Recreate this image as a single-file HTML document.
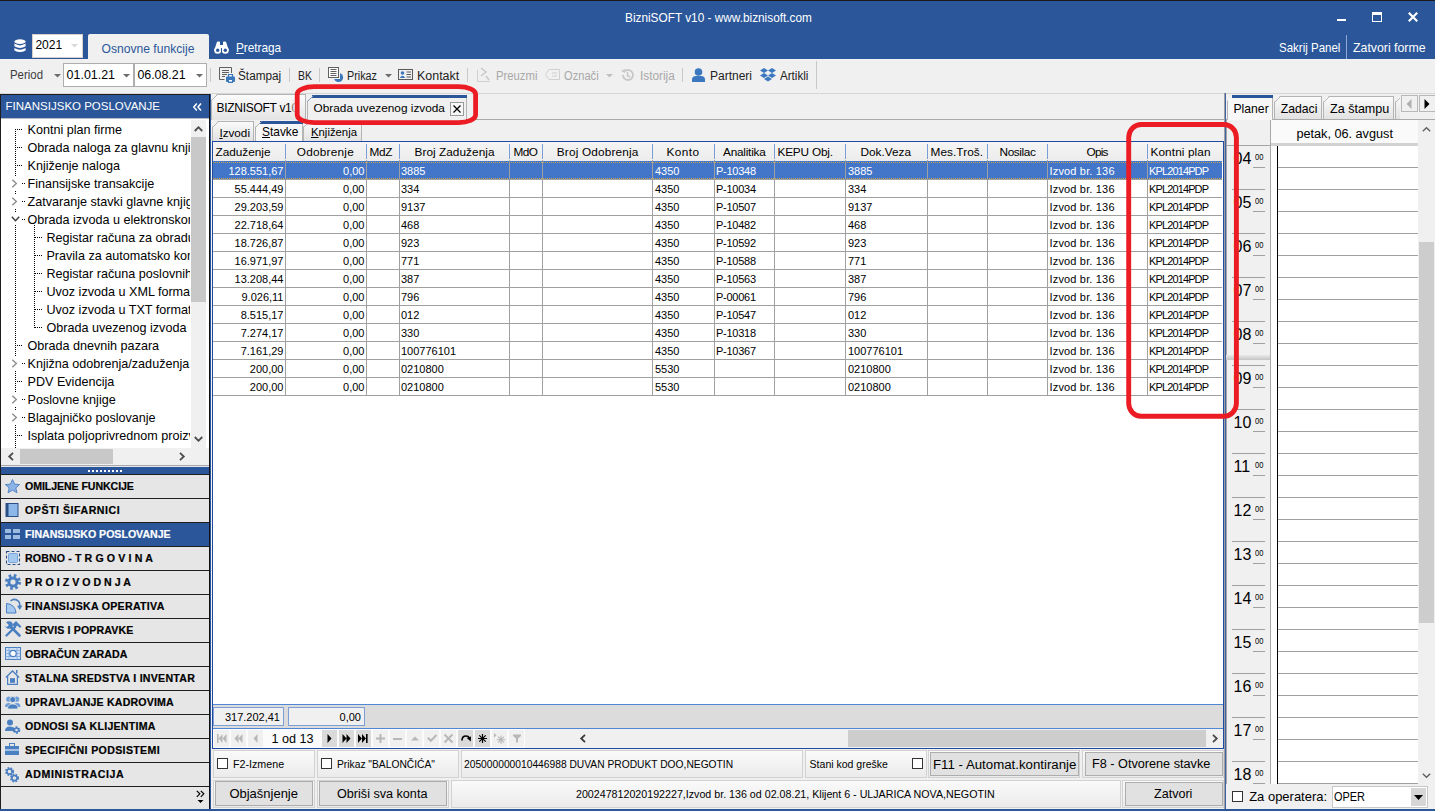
<!DOCTYPE html>
<html><head><meta charset="utf-8"><title>BizniSOFT</title>
<style>
html,body{margin:0;padding:0;}
body{width:1435px;height:811px;overflow:hidden;position:relative;background:#f0f0f0;font-family:"Liberation Sans",sans-serif;}
div{position:absolute;box-sizing:border-box;}
svg{overflow:visible;}
</style></head><body>
<div style="left:0px;top:0px;width:1435px;height:1px;background:#1b1b1b;"></div>
<div style="left:0px;top:1px;width:1435px;height:58px;background:#2b579a;"></div>
<div style="left:625px;top:9.4px;width:215.97px;height:17px;line-height:17px;font-size:13.4px;color:#fff;white-space:nowrap;transform:scaleX(0.8822);transform-origin:0 50%;">BizniSOFT v10 - www.biznisoft.com</div>
<div style="left:1337px;top:19px;width:9px;height:2px;background:#fff;"></div>
<div style="left:1372px;top:11.6px;width:10px;height:10px;border:1px solid #fff;border-top-width:3px;"></div>
<svg style="position:absolute;left:1408px;top:11.8px;" width="10" height="10" viewBox="0 0 10 10"><path d="M0.8 0.8 L9.2 9.2 M9.2 0.8 L0.8 9.2" stroke="#fff" stroke-width="2.2"/></svg>
<div style="left:1279px;top:39.4px;width:72.3px;height:17px;line-height:17px;font-size:12.8px;color:#fff;white-space:nowrap;transform:scaleX(0.8990);transform-origin:0 50%;">Sakrij Panel</div>
<div style="left:1346px;top:35px;width:1px;height:24px;background:#8fa9d4;"></div>
<div style="left:1353px;top:39.4px;width:79.39px;height:17px;line-height:17px;font-size:12.8px;color:#fff;white-space:nowrap;transform:scaleX(0.9630);transform-origin:0 50%;">Zatvori forme</div>
<svg style="position:absolute;left:14px;top:39px;" width="12" height="14" viewBox="0 0 12 14"><ellipse cx="6" cy="2.6" rx="5.6" ry="2.4" fill="#fff"/><path d="M0.4 4.6 Q6 8.2 11.6 4.6 V7.2 Q6 10.6 0.4 7.2Z" fill="#fff"/><path d="M0.4 9 Q6 12.6 11.6 9 V11.4 Q6 14.6 0.4 11.4Z" fill="#fff"/></svg>
<div style="left:32px;top:34px;width:51px;height:24px;background:#fff;border:1px solid #d6d0c8;"></div>
<div style="left:35.4px;top:37.1px;width:30.8px;height:16px;line-height:16px;font-size:12.05px;color:#000;white-space:nowrap;">2021</div>
<svg style="position:absolute;left:71px;top:44px;" width="7" height="4" viewBox="0 0 7 4"><path d="M0 0 H7 L3.5 3.5Z" fill="#d8d8d8"/></svg>
<div style="left:88px;top:34px;width:121px;height:25px;background:#f0f0f0;border-radius:2px 2px 0 0;"></div>
<div style="left:101.6px;top:40.5px;width:96.81px;height:16px;line-height:16px;font-size:12.1px;color:#2b579a;white-space:nowrap;">Osnovne funkcije</div>
<svg style="position:absolute;left:213.5px;top:40.5px;" width="15" height="13" viewBox="0 0 15 13"><path d="M3 0.8 Q4.5 0 6 0.8 V4 H9 V0.8 Q10.5 0 12 0.8 L14.6 9 H0.4Z" fill="#fff"/><circle cx="3.7" cy="9.2" r="3.5" fill="#fff"/><circle cx="11.3" cy="9.2" r="3.5" fill="#fff"/><circle cx="3.7" cy="9.2" r="1.7" fill="#2b579a"/><circle cx="11.3" cy="9.2" r="1.7" fill="#2b579a"/><rect x="7" y="7" width="1" height="4" fill="#2b579a"/></svg>
<div style="left:236.4px;top:39.6px;width:50.79px;height:16px;line-height:16px;font-size:12.2px;color:#fff;white-space:nowrap;transform:scaleX(0.9660);transform-origin:0 50%;"><u>P</u>retraga</div>
<div style="left:10px;top:67.3px;width:38.69px;height:16px;line-height:16px;font-size:12px;color:#3c3c3c;white-space:nowrap;transform:scaleX(0.9514);transform-origin:0 50%;">Period</div>
<svg style="position:absolute;left:54px;top:73.5px;" width="7" height="4" viewBox="0 0 7 4"><path d="M0 0 H7 L3.5 3.5Z" fill="#6d6d6d"/></svg>
<div style="left:63px;top:63px;width:71px;height:24px;background:#fff;border:1px solid #adadad;"></div>
<div style="left:66.6px;top:67.4px;width:52.42px;height:16px;line-height:16px;font-size:12.44px;color:#000;white-space:nowrap;">01.01.21</div>
<svg style="position:absolute;left:122.5px;top:73.5px;" width="7" height="4" viewBox="0 0 7 4"><path d="M0 0 H7 L3.5 3.5Z" fill="#6d6d6d"/></svg>
<div style="left:134px;top:63px;width:73px;height:24px;background:#fff;border:1px solid #adadad;"></div>
<div style="left:137.4px;top:67.4px;width:52.19px;height:16px;line-height:16px;font-size:12.38px;color:#000;white-space:nowrap;">06.08.21</div>
<svg style="position:absolute;left:195.5px;top:73.5px;" width="7" height="4" viewBox="0 0 7 4"><path d="M0 0 H7 L3.5 3.5Z" fill="#6d6d6d"/></svg>
<div style="left:210px;top:68px;width:1px;height:14px;background:#c9c9c9;"></div>
<div style="left:289px;top:68px;width:1px;height:14px;background:#c9c9c9;"></div>
<div style="left:319px;top:68px;width:1px;height:14px;background:#c9c9c9;"></div>
<div style="left:467px;top:68px;width:1px;height:14px;background:#c9c9c9;"></div>
<div style="left:682px;top:68px;width:1px;height:14px;background:#c9c9c9;"></div>
<div style="left:816px;top:61px;width:1px;height:28px;background:#c9c9c9;"></div>
<svg style="position:absolute;left:219px;top:67px;" width="16" height="17" viewBox="0 0 16 17"><path d="M5.5 12.5 H0.5 V0.5 H12.5 V6" fill="none" stroke="#606060"/><path d="M3 3.5 H10 M3 5.5 H10 M3 7.5 H8 M3 9.5 H6" stroke="#606060"/><path d="M9.5 10.5 V7.5 H13.5 V10.5" fill="none" stroke="#3a78bb" stroke-width="1.2"/><rect x="7" y="9.5" width="9" height="5.5" rx="1" fill="#3a78bb"/><rect x="9" y="12.5" width="5" height="3.5" fill="#3a78bb"/><rect x="10" y="13" width="3" height="1.6" fill="#fff"/></svg>
<div style="left:238.4px;top:68px;width:48.02px;height:16px;line-height:16px;font-size:12px;color:#222;white-space:nowrap;transform:scaleX(0.9814);transform-origin:0 50%;">Štampaj</div>
<div style="left:298px;top:68px;width:20.01px;height:16px;line-height:16px;font-size:12px;color:#222;white-space:nowrap;transform:scaleX(0.8745);transform-origin:0 50%;">BK</div>
<svg style="position:absolute;left:328px;top:67px;" width="16" height="16" viewBox="0 0 16 16"><circle cx="10.5" cy="10.5" r="4.6" fill="#3a78bb"/><rect x="0" y="0" width="12" height="12" fill="#f0f0f0"/><rect x="0.5" y="0.5" width="10" height="10" fill="#fff" stroke="#606060"/><path d="M2.5 2.5 H8.5 M2.5 4.5 H8.5 M2.5 6.5 H8.5 M2.5 8.5 H8.5" stroke="#606060"/></svg>
<div style="left:347px;top:68px;width:37.34px;height:16px;line-height:16px;font-size:12px;color:#222;white-space:nowrap;transform:scaleX(0.8998);transform-origin:0 50%;">Prikaz</div>
<svg style="position:absolute;left:385px;top:73.5px;" width="7" height="4" viewBox="0 0 7 4"><path d="M0 0 H7 L3.5 3.5Z" fill="#6d6d6d"/></svg>
<svg style="position:absolute;left:398px;top:69px;" width="15" height="11" viewBox="0 0 15 11"><rect x="0.5" y="0.5" width="14" height="10" fill="none" stroke="#5a5a5a"/><circle cx="4.5" cy="4" r="1.8" fill="#3c78c0"/><path d="M1.8 9 Q4.5 4.5 7.2 9Z" fill="#3c78c0"/><path d="M8.5 3 H13 M8.5 5.5 H13 M8.5 8 H13" stroke="#5a5a5a"/></svg>
<div style="left:417.4px;top:68px;width:44.69px;height:16px;line-height:16px;font-size:12px;color:#222;white-space:nowrap;transform:scaleX(1.0371);transform-origin:0 50%;">Kontakt</div>
<svg style="position:absolute;left:477px;top:67px;" width="14" height="15" viewBox="0 0 14 15"><path d="M0.5 3 V14.5 H13" fill="none" stroke="#d0d0d0"/><path d="M4 1 L9 5 L4 9 M9 9 L12 13" fill="none" stroke="#c8c8c8" stroke-width="1.5"/></svg>
<div style="left:495.6px;top:68px;width:48.01px;height:16px;line-height:16px;font-size:12px;color:#a8a8a8;white-space:nowrap;transform:scaleX(0.9407);transform-origin:0 50%;">Preuzmi</div>
<svg style="position:absolute;left:545px;top:69px;" width="15" height="11" viewBox="0 0 15 11"><path d="M4 0.5 H14.5 V10.5 H4 L0.5 5.5Z" fill="none" stroke="#d0d0d0"/><path d="M7 4 H12 M7 7 H12" stroke="#d0d0d0"/></svg>
<div style="left:564.4px;top:68px;width:41.35px;height:16px;line-height:16px;font-size:12px;color:#a8a8a8;white-space:nowrap;transform:scaleX(0.9265);transform-origin:0 50%;">Označi</div>
<svg style="position:absolute;left:606px;top:73.5px;" width="7" height="4" viewBox="0 0 7 4"><path d="M0 0 H7 L3.5 3.5Z" fill="#c0c0c0"/></svg>
<svg style="position:absolute;left:621px;top:69px;" width="13" height="12" viewBox="0 0 13 12"><path d="M2 6 A5 5 0 1 0 4 2" fill="none" stroke="#c8c8c8" stroke-width="1.8"/><path d="M0 2 L4 0 L4 4Z" fill="#c8c8c8"/><path d="M6.5 3 V6.5 L9 8" fill="none" stroke="#c8c8c8" stroke-width="1.5"/></svg>
<div style="left:639.6px;top:68px;width:39.34px;height:16px;line-height:16px;font-size:12px;color:#a8a8a8;white-space:nowrap;transform:scaleX(0.9847);transform-origin:0 50%;">Istorija</div>
<svg style="position:absolute;left:692px;top:68px;" width="13" height="14" viewBox="0 0 13 14"><circle cx="6.5" cy="4" r="3.8" fill="#3c78c0"/><path d="M0 14 V11.5 Q0 8 4 8 H9 Q13 8 13 11.5 V14Z" fill="#3c78c0"/></svg>
<div style="left:710px;top:68px;width:46.02px;height:16px;line-height:16px;font-size:12px;color:#222;white-space:nowrap;transform:scaleX(0.9996);transform-origin:0 50%;">Partneri</div>
<svg style="position:absolute;left:760px;top:68px;" width="16" height="14" viewBox="0 0 16 14"><path d="M4 0 L8 2.5 L4 5 L0 2.5Z M12 0 L16 2.5 L12 5 L8 2.5Z M4 5 L8 7.5 L4 10 L0 7.5Z M12 5 L16 7.5 L12 10 L8 7.5Z M4 11 L8 8.5 L12 11 L8 13.5Z" fill="#3c78c0"/></svg>
<div style="left:779.6px;top:68px;width:33.33px;height:16px;line-height:16px;font-size:12px;color:#222;white-space:nowrap;transform:scaleX(0.9682);transform-origin:0 50%;">Artikli</div>
<div style="left:0px;top:93px;width:1435px;height:1px;background:#d6d6d6;"></div>
<div style="left:0px;top:94px;width:211px;height:717px;background:#1e1e1e;"></div>
<div style="left:1px;top:95px;width:208px;height:23px;background:#2b579a;"></div>
<div style="left:5.6px;top:99.1px;width:158.44px;height:15px;line-height:15px;font-size:11.5px;color:#fff;white-space:nowrap;">FINANSIJSKO POSLOVANJE</div>
<svg style="position:absolute;left:193px;top:102.6px;" width="9" height="8" viewBox="0 0 9 8"><path d="M3.8 0.5 L0.8 4 L3.8 7.5 M8 0.5 L5 4 L8 7.5" fill="none" stroke="#fff" stroke-width="1.5"/></svg>
<div style="left:209px;top:94px;width:1px;height:717px;background:#111;"></div>
<div style="left:210px;top:94px;width:1px;height:717px;background:#2b579a;"></div>
<div style="left:1px;top:118px;width:208px;height:331px;background:#fff;"></div>
<div style="left:1px;top:118px;width:208px;height:1px;background:#b9bcc2;"></div>
<div style="left:1px;top:118px;width:189px;height:330px;overflow:hidden;">
<div style="left:14px;top:11px;width:1px;height:330px;background-image:linear-gradient(#000 50%, transparent 50%);background-size:1px 2px;"></div>
<div style="left:14px;top:11px;width:8px;height:1px;background-image:linear-gradient(90deg,#000 50%, transparent 50%);background-size:2px 1px;"></div>
<div style="left:26.5px;top:2.5px;height:18px;line-height:18px;font-size:12.6px;color:#000;white-space:nowrap;">Kontni plan firme</div>
<div style="left:14px;top:29px;width:8px;height:1px;background-image:linear-gradient(90deg,#000 50%, transparent 50%);background-size:2px 1px;"></div>
<div style="left:26.5px;top:20.5px;height:18px;line-height:18px;font-size:12.6px;color:#000;white-space:nowrap;">Obrada naloga za glavnu knjige</div>
<div style="left:14px;top:47px;width:8px;height:1px;background-image:linear-gradient(90deg,#000 50%, transparent 50%);background-size:2px 1px;"></div>
<div style="left:26.5px;top:38.5px;height:18px;line-height:18px;font-size:12.6px;color:#000;white-space:nowrap;">Knjiženje naloga</div>
<div style="left:21px;top:65px;width:3px;height:1px;background-image:linear-gradient(90deg,#000 50%, transparent 50%);background-size:2px 1px;"></div>
<div style="left:26.5px;top:56.5px;height:18px;line-height:18px;font-size:12.6px;color:#000;white-space:nowrap;">Finansijske transakcije</div>
<svg style="position:absolute;left:8px;top:59px;background:#fff;" width="11" height="13"><path d="M3.3 2.8 L7.3 6.5 L3.3 10.2" fill="none" stroke="#8c8c8c" stroke-width="1.4"/></svg>
<div style="left:21px;top:83px;width:3px;height:1px;background-image:linear-gradient(90deg,#000 50%, transparent 50%);background-size:2px 1px;"></div>
<div style="left:26.5px;top:74.5px;height:18px;line-height:18px;font-size:12.6px;color:#000;white-space:nowrap;">Zatvaranje stavki glavne knjige</div>
<svg style="position:absolute;left:8px;top:77px;background:#fff;" width="11" height="13"><path d="M3.3 2.8 L7.3 6.5 L3.3 10.2" fill="none" stroke="#8c8c8c" stroke-width="1.4"/></svg>
<div style="left:21px;top:101px;width:3px;height:1px;background-image:linear-gradient(90deg,#000 50%, transparent 50%);background-size:2px 1px;"></div>
<div style="left:26.5px;top:92.5px;height:18px;line-height:18px;font-size:12.6px;color:#000;white-space:nowrap;">Obrada izvoda u elektronskom obliku</div>
<svg style="position:absolute;left:9px;top:95px;background:#fff;" width="11" height="12"><path d="M1.8 3.8 L5.5 7.8 L9.2 3.8" fill="none" stroke="#3c3c3c" stroke-width="1.4"/></svg>
<div style="left:34px;top:119px;width:8px;height:1px;background-image:linear-gradient(90deg,#000 50%, transparent 50%);background-size:2px 1px;"></div>
<div style="left:45.4px;top:110.5px;height:18px;line-height:18px;font-size:12.6px;color:#000;white-space:nowrap;">Registar računa za obradu</div>
<div style="left:34px;top:137px;width:8px;height:1px;background-image:linear-gradient(90deg,#000 50%, transparent 50%);background-size:2px 1px;"></div>
<div style="left:45.4px;top:128.5px;height:18px;line-height:18px;font-size:12.6px;color:#000;white-space:nowrap;">Pravila za automatsko kontiranje</div>
<div style="left:34px;top:155px;width:8px;height:1px;background-image:linear-gradient(90deg,#000 50%, transparent 50%);background-size:2px 1px;"></div>
<div style="left:45.4px;top:146.5px;height:18px;line-height:18px;font-size:12.6px;color:#000;white-space:nowrap;">Registar računa poslovnih banaka</div>
<div style="left:34px;top:173px;width:8px;height:1px;background-image:linear-gradient(90deg,#000 50%, transparent 50%);background-size:2px 1px;"></div>
<div style="left:45.4px;top:164.5px;height:18px;line-height:18px;font-size:12.6px;color:#000;white-space:nowrap;">Uvoz izvoda u XML formatu</div>
<div style="left:34px;top:191px;width:8px;height:1px;background-image:linear-gradient(90deg,#000 50%, transparent 50%);background-size:2px 1px;"></div>
<div style="left:45.4px;top:182.5px;height:18px;line-height:18px;font-size:12.6px;color:#000;white-space:nowrap;">Uvoz izvoda u TXT formatu</div>
<div style="left:34px;top:209px;width:8px;height:1px;background-image:linear-gradient(90deg,#000 50%, transparent 50%);background-size:2px 1px;"></div>
<div style="left:45.4px;top:200.5px;height:18px;line-height:18px;font-size:12.6px;color:#000;white-space:nowrap;">Obrada uvezenog izvoda</div>
<div style="left:14px;top:227px;width:8px;height:1px;background-image:linear-gradient(90deg,#000 50%, transparent 50%);background-size:2px 1px;"></div>
<div style="left:26.5px;top:218.5px;height:18px;line-height:18px;font-size:12.6px;color:#000;white-space:nowrap;">Obrada dnevnih pazara</div>
<div style="left:21px;top:245px;width:3px;height:1px;background-image:linear-gradient(90deg,#000 50%, transparent 50%);background-size:2px 1px;"></div>
<div style="left:26.5px;top:236.5px;height:18px;line-height:18px;font-size:12.6px;color:#000;white-space:nowrap;">Knjižna odobrenja/zaduženja</div>
<svg style="position:absolute;left:8px;top:239px;background:#fff;" width="11" height="13"><path d="M3.3 2.8 L7.3 6.5 L3.3 10.2" fill="none" stroke="#8c8c8c" stroke-width="1.4"/></svg>
<div style="left:14px;top:263px;width:8px;height:1px;background-image:linear-gradient(90deg,#000 50%, transparent 50%);background-size:2px 1px;"></div>
<div style="left:26.5px;top:254.5px;height:18px;line-height:18px;font-size:12.6px;color:#000;white-space:nowrap;">PDV Evidencija</div>
<div style="left:21px;top:281px;width:3px;height:1px;background-image:linear-gradient(90deg,#000 50%, transparent 50%);background-size:2px 1px;"></div>
<div style="left:26.5px;top:272.5px;height:18px;line-height:18px;font-size:12.6px;color:#000;white-space:nowrap;">Poslovne knjige</div>
<svg style="position:absolute;left:8px;top:275px;background:#fff;" width="11" height="13"><path d="M3.3 2.8 L7.3 6.5 L3.3 10.2" fill="none" stroke="#8c8c8c" stroke-width="1.4"/></svg>
<div style="left:21px;top:299px;width:3px;height:1px;background-image:linear-gradient(90deg,#000 50%, transparent 50%);background-size:2px 1px;"></div>
<div style="left:26.5px;top:290.5px;height:18px;line-height:18px;font-size:12.6px;color:#000;white-space:nowrap;">Blagajničko poslovanje</div>
<svg style="position:absolute;left:8px;top:293px;background:#fff;" width="11" height="13"><path d="M3.3 2.8 L7.3 6.5 L3.3 10.2" fill="none" stroke="#8c8c8c" stroke-width="1.4"/></svg>
<div style="left:14px;top:317px;width:8px;height:1px;background-image:linear-gradient(90deg,#000 50%, transparent 50%);background-size:2px 1px;"></div>
<div style="left:26.5px;top:308.5px;height:18px;line-height:18px;font-size:12.6px;color:#000;white-space:nowrap;">Isplata poljoprivrednom proizvođaču</div>
<div style="left:33px;top:107px;width:1px;height:103px;background-image:linear-gradient(#000 50%, transparent 50%);background-size:1px 2px;"></div>
</div>
<div style="left:191px;top:120px;width:15px;height:328px;background:#f0f0f0;"></div>
<div style="left:191px;top:137px;width:15px;height:165px;background:#c8c8c8;"></div>
<svg style="position:absolute;left:194px;top:126px;" width="9" height="6" viewBox="0 0 9 6"><path d="M0.8 5 L4.5 1.2 L8.2 5" fill="none" stroke="#4a4a4a" stroke-width="1.8"/></svg>
<svg style="position:absolute;left:194px;top:436px;" width="9" height="6" viewBox="0 0 9 6"><path d="M0.8 1 L4.5 4.8 L8.2 1" fill="none" stroke="#4a4a4a" stroke-width="1.8"/></svg>
<div style="left:1px;top:448px;width:208px;height:17px;background:#f0f0f0;"></div>
<div style="left:20px;top:449px;width:93px;height:15px;background:#c8c8c8;"></div>
<svg style="position:absolute;left:8px;top:452px;" width="6" height="9" viewBox="0 0 6 9"><path d="M5 0.8 L1.2 4.5 L5 8.2" fill="none" stroke="#4a4a4a" stroke-width="1.8"/></svg>
<svg style="position:absolute;left:179px;top:452px;" width="6" height="9" viewBox="0 0 6 9"><path d="M1 0.8 L4.8 4.5 L1 8.2" fill="none" stroke="#4a4a4a" stroke-width="1.8"/></svg>
<div style="left:1px;top:465px;width:208px;height:1px;background:#a8a8a8;"></div>
<div style="left:1px;top:466px;width:208px;height:1px;background:#e4e8ee;"></div>
<div style="left:1px;top:467px;width:208px;height:7px;background:#2b579a;"></div>
<div style="left:88px;top:470px;width:2px;height:2px;background:#fff;"></div>
<div style="left:92px;top:470px;width:2px;height:2px;background:#fff;"></div>
<div style="left:96px;top:470px;width:2px;height:2px;background:#fff;"></div>
<div style="left:100px;top:470px;width:2px;height:2px;background:#fff;"></div>
<div style="left:104px;top:470px;width:2px;height:2px;background:#fff;"></div>
<div style="left:108px;top:470px;width:2px;height:2px;background:#fff;"></div>
<div style="left:112px;top:470px;width:2px;height:2px;background:#fff;"></div>
<div style="left:116px;top:470px;width:2px;height:2px;background:#fff;"></div>
<div style="left:120px;top:470px;width:2px;height:2px;background:#fff;"></div>
<div style="left:1px;top:475px;width:208px;height:23px;background:#e6e6e6;"></div>
<svg style="position:absolute;left:5px;top:479px;" width="16" height="16" viewBox="0 0 16 16"><path d="M7.5 0.5 L9.6 5.2 L14.6 5.6 L10.8 8.9 L12 13.8 L7.5 11.2 L3 13.8 L4.2 8.9 L0.4 5.6 L5.4 5.2Z" fill="#8cb4e6" stroke="#4a7fc1" stroke-width="0.9"/></svg>
<div style="left:25px;top:478.9px;width:112.93px;height:14px;line-height:14px;font-size:10.6px;color:#000;white-space:nowrap;font-weight:bold;-webkit-text-stroke:0.2px #000;letter-spacing:-0.071px;">OMILJENE FUNKCIJE</div>
<div style="left:1px;top:499px;width:208px;height:23px;background:#e6e6e6;"></div>
<svg style="position:absolute;left:5px;top:503px;" width="16" height="16" viewBox="0 0 16 16"><rect x="1" y="0.5" width="12" height="13" fill="#8cb8e8" stroke="#2a4f86"/><rect x="1" y="0.5" width="2.5" height="13" fill="#2a4f86"/></svg>
<div style="left:25px;top:502.9px;width:99.24px;height:14px;line-height:14px;font-size:10.6px;color:#000;white-space:nowrap;font-weight:bold;-webkit-text-stroke:0.2px #000;letter-spacing:0.538px;">OPŠTI ŠIFARNICI</div>
<div style="left:1px;top:523px;width:208px;height:23px;background:#2b579a;"></div>
<svg style="position:absolute;left:5px;top:527px;" width="16" height="16" viewBox="0 0 16 16"><rect x="0" y="2" width="6" height="4" fill="#9cbbe2"/><rect x="8" y="2" width="7" height="4" fill="#9cbbe2"/><rect x="0" y="8" width="6" height="4" fill="#9cbbe2"/><rect x="8" y="8" width="7" height="4" fill="#9cbbe2"/></svg>
<div style="left:25px;top:526.9px;width:149.69px;height:14px;line-height:14px;font-size:10.6px;color:#fff;white-space:nowrap;font-weight:bold;-webkit-text-stroke:0.2px #fff;letter-spacing:-0.008px;">FINANSIJSKO POSLOVANJE</div>
<div style="left:1px;top:547px;width:208px;height:23px;background:#e6e6e6;"></div>
<svg style="position:absolute;left:6px;top:551px;" width="16" height="16" viewBox="0 0 16 16"><rect x="0.5" y="0.5" width="13" height="13" fill="none" stroke="#2a4f86" stroke-width="1.1" stroke-dasharray="3 2"/><rect x="2.5" y="2.5" width="9" height="9" rx="1" fill="#a5c8ef" stroke="#6a9bd8" stroke-width="0.8"/></svg>
<div style="left:25px;top:550.9px;width:132.03px;height:14px;line-height:14px;font-size:10.6px;color:#000;white-space:nowrap;font-weight:bold;-webkit-text-stroke:0.2px #000;letter-spacing:0.130px;">ROBNO - T R G O V I N A</div>
<div style="left:1px;top:571px;width:208px;height:23px;background:#e6e6e6;"></div>
<svg style="position:absolute;left:5px;top:574px;" width="16" height="16" viewBox="0 0 16 16"><circle cx="8" cy="8" r="6.4" fill="none" stroke="#4a7fc1" stroke-width="3.2" stroke-dasharray="2.5 2.53"/><circle cx="8" cy="8" r="5.6" fill="#4a7fc1"/><circle cx="8" cy="8" r="2.6" fill="#e6e6e6"/></svg>
<div style="left:25px;top:574.9px;width:109.92px;height:14px;line-height:14px;font-size:10.6px;color:#000;white-space:nowrap;font-weight:bold;-webkit-text-stroke:0.2px #000;letter-spacing:0.024px;">P R O I Z V O D N J A</div>
<div style="left:1px;top:595px;width:208px;height:23px;background:#e6e6e6;"></div>
<svg style="position:absolute;left:5px;top:598px;" width="16" height="16" viewBox="0 0 16 16"><path d="M1.5 15 V5.5 A9.5 9.5 0 0 1 11 15Z" fill="#a5c8ef" stroke="#4a7fc1" stroke-width="1"/><path d="M5.5 3 Q9.5 -0.5 13.8 3.5 Q15 5 14.8 8.5" fill="none" stroke="#4a7fc1" stroke-width="1.6"/><path d="M12 7.8 L14.8 12 L17.4 7.6Z" fill="#4a7fc1"/></svg>
<div style="left:25px;top:598.9px;width:143.7px;height:14px;line-height:14px;font-size:10.6px;color:#000;white-space:nowrap;font-weight:bold;-webkit-text-stroke:0.2px #000;letter-spacing:0.295px;">FINANSIJSKA OPERATIVA</div>
<div style="left:1px;top:619px;width:208px;height:23px;background:#e6e6e6;"></div>
<svg style="position:absolute;left:5px;top:621px;" width="16" height="16" viewBox="0 0 16 16"><path d="M5 5 L14.5 14.5" stroke="#4a7fc1" stroke-width="2.6" stroke-linecap="round"/><circle cx="4" cy="4" r="3.8" fill="#4a7fc1"/><rect x="-1.5" y="1.8" width="5" height="3" transform="rotate(45 1 3.3)" fill="#e6e6e6"/><path d="M1.5 14.5 L10 6" stroke="#4a7fc1" stroke-width="2.4" stroke-linecap="round"/><path d="M7.2 3.8 L11 0 L16.5 5.5 L15 7 L12.2 4.4 L10.2 6.6Z" fill="#4a7fc1"/></svg>
<div style="left:25px;top:622.9px;width:112.54px;height:14px;line-height:14px;font-size:10.6px;color:#000;white-space:nowrap;font-weight:bold;-webkit-text-stroke:0.2px #000;letter-spacing:0.136px;">SERVIS I POPRAVKE</div>
<div style="left:1px;top:643px;width:208px;height:23px;background:#e6e6e6;"></div>
<svg style="position:absolute;left:5px;top:647px;" width="16" height="16" viewBox="0 0 16 16"><rect x="0.5" y="0.5" width="15" height="12" fill="#cfe0f5" stroke="#4a7fc1"/><path d="M0.5 3.5 H15.5 M0.5 6.5 H15.5 M0.5 9.5 H15.5 M4 0.5 V12.5 M12 0.5 V12.5" stroke="#7aa6dc" stroke-width="0.8"/><circle cx="8" cy="6.5" r="3.2" fill="#fff" stroke="#4a7fc1" stroke-width="1.2"/></svg>
<div style="left:25px;top:646.9px;width:106.44px;height:14px;line-height:14px;font-size:10.6px;color:#000;white-space:nowrap;font-weight:bold;-webkit-text-stroke:0.2px #000;letter-spacing:0.041px;">OBRAČUN ZARADA</div>
<div style="left:1px;top:667px;width:208px;height:23px;background:#e6e6e6;"></div>
<svg style="position:absolute;left:5px;top:670px;" width="16" height="16" viewBox="0 0 16 16"><path d="M0.8 7.5 L7.5 1 L14.2 7.5" fill="none" stroke="#4a7fc1" stroke-width="1.3"/><path d="M2.6 6 V14.4 H12.4 V6" fill="none" stroke="#4a7fc1" stroke-width="1.2"/><rect x="11" y="0" width="1.5" height="3.5" fill="#4a7fc1"/><rect x="5" y="8.2" width="5" height="4.6" fill="#4a7fc1"/></svg>
<div style="left:25px;top:670.9px;width:174.16px;height:14px;line-height:14px;font-size:10.6px;color:#000;white-space:nowrap;font-weight:bold;-webkit-text-stroke:0.2px #000;letter-spacing:0.255px;">STALNA SREDSTVA I INVENTAR</div>
<div style="left:1px;top:691px;width:208px;height:23px;background:#e6e6e6;"></div>
<svg style="position:absolute;left:5px;top:695px;" width="16" height="16" viewBox="0 0 16 16"><circle cx="3.8" cy="4.2" r="2.6" fill="#6f9fd8"/><circle cx="11.6" cy="4.2" r="2.6" fill="#6f9fd8"/><path d="M0 12 Q0 8 3.8 8 Q6 8 6.5 9.5 V12Z M15.5 12 Q15.5 8 11.6 8 Q9.5 8 9 9.5 V12Z" fill="#6f9fd8"/><circle cx="7.75" cy="4.6" r="3" fill="#4a7fc1" stroke="#e6e6e6" stroke-width="0.8"/><path d="M2.5 14 Q2.5 9 7.75 9 Q13 9 13 14Z" fill="#4a7fc1" stroke="#e6e6e6" stroke-width="0.8"/></svg>
<div style="left:25px;top:694.9px;width:152.98px;height:14px;line-height:14px;font-size:10.6px;color:#000;white-space:nowrap;font-weight:bold;-webkit-text-stroke:0.2px #000;letter-spacing:0.176px;">UPRAVLJANJE KADROVIMA</div>
<div style="left:1px;top:715px;width:208px;height:23px;background:#e6e6e6;"></div>
<svg style="position:absolute;left:5px;top:719px;" width="16" height="16" viewBox="0 0 16 16"><circle cx="5" cy="3.5" r="3" fill="#4a7fc1"/><path d="M0 12 Q0 7.5 5 7.5 Q8 7.5 9 9 V12Z" fill="#4a7fc1"/><circle cx="11.5" cy="11" r="2.6" fill="none" stroke="#4a7fc1" stroke-width="2.4" stroke-dasharray="1.6 1.2"/><circle cx="11.5" cy="11" r="2" fill="none" stroke="#4a7fc1" stroke-width="1.3"/></svg>
<div style="left:25px;top:718.9px;width:134.76px;height:14px;line-height:14px;font-size:10.6px;color:#000;white-space:nowrap;font-weight:bold;-webkit-text-stroke:0.2px #000;letter-spacing:0.256px;">ODNOSI SA KLIJENTIMA</div>
<div style="left:1px;top:739px;width:208px;height:23px;background:#e6e6e6;"></div>
<svg style="position:absolute;left:5px;top:743px;" width="16" height="16" viewBox="0 0 16 16"><rect x="4.5" y="0.5" width="5" height="3" fill="none" stroke="#4a7fc1"/><rect x="0" y="3" width="14" height="9" fill="#4a7fc1"/><rect x="0" y="6.5" width="14" height="1" fill="#fff"/></svg>
<div style="left:25px;top:742.9px;width:139.04px;height:14px;line-height:14px;font-size:10.6px;color:#000;white-space:nowrap;font-weight:bold;-webkit-text-stroke:0.2px #000;letter-spacing:0.345px;">SPECIFIČNI PODSISTEMI</div>
<div style="left:1px;top:763px;width:208px;height:23px;background:#e6e6e6;"></div>
<svg style="position:absolute;left:5px;top:767px;" width="16" height="16" viewBox="0 0 16 16"><circle cx="4.5" cy="4.5" r="3.2" fill="none" stroke="#4a7fc1" stroke-width="2.6" stroke-dasharray="1.5 1.1"/><circle cx="4.5" cy="4.5" r="2.6" fill="none" stroke="#4a7fc1" stroke-width="1.5"/><circle cx="9.5" cy="11" r="3.2" fill="none" stroke="#4a7fc1" stroke-width="2.6" stroke-dasharray="1.5 1.1"/><circle cx="9.5" cy="11" r="2.6" fill="none" stroke="#4a7fc1" stroke-width="1.5"/></svg>
<div style="left:25px;top:766.9px;width:103.42px;height:14px;line-height:14px;font-size:10.6px;color:#000;white-space:nowrap;font-weight:bold;-webkit-text-stroke:0.2px #000;letter-spacing:0.624px;">ADMINISTRACIJA</div>
<div style="left:1px;top:787px;width:208px;height:22px;background:#e6e6e6;"></div>
<svg style="position:absolute;left:196px;top:790px;" width="9" height="16" viewBox="0 0 9 16"><path d="M0.8 0.8 L3.8 3.8 L0.8 6.8 M4.8 0.8 L7.8 3.8 L4.8 6.8" fill="none" stroke="#000" stroke-width="1.2"/><path d="M1.5 10 H7.5 L4.5 13Z" fill="#000"/></svg>
<div style="left:211px;top:119px;width:1014px;height:1px;background:#a9a9a9;"></div>
<div style="left:211px;top:94px;width:95px;height:26px;overflow:hidden;"><div style="left:0;top:0;width:95px;height:26px;border:1px solid #b4b4b4;border-bottom:none;background:linear-gradient(#fbfbfb,#e4e4e4);clip-path:polygon(6px 0,100% 0,100% 100%,0 100%,0 6px);"></div><svg style="position:absolute;left:0;top:0" width="7" height="7"><path d="M0.5 6.5 L6.5 0.5" stroke="#b4b4b4"/></svg></div>
<div style="left:216px;top:99px;width:84px;height:18px;overflow:hidden;"><div style="left:0.6px;top:0;height:18px;line-height:18px;font-size:12px;letter-spacing:-0.3px;white-space:nowrap;color:#000;">BIZNISOFT v10</div><div style="left:74px;top:0;width:10px;height:18px;background:linear-gradient(90deg,rgba(238,238,238,0),rgba(238,238,238,0.85) 50%,#eeeeee 80%);"></div></div>
<div style="left:307px;top:95px;width:160px;height:25px;background:#f0f0f0;border-left:1px solid #b4b4b4;border-right:1px solid #b4b4b4;clip-path:polygon(6px 0,100% 0,100% 100%,0 100%,0 6px);"></div>
<div style="left:312px;top:95px;width:155px;height:3px;background:#2b579a;"></div>
<svg style="position:absolute;left:307px;top:95px;" width="7" height="7" viewBox="0 0 7 7"><path d="M0.5 6.5 L6.5 0.5" stroke="#8aa0c0"/></svg>
<div style="left:313.6px;top:101px;width:135.41px;height:15px;line-height:15px;font-size:11.82px;color:#000;white-space:nowrap;">Obrada uvezenog izvoda</div>
<div style="left:450px;top:102px;width:14px;height:14px;border:1px solid #9a9a9a;background:#f7f7f7;"></div>
<svg style="position:absolute;left:453px;top:105px;" width="8" height="8" viewBox="0 0 8 8"><path d="M0.5 0.5 L7.5 7.5 M7.5 0.5 L0.5 7.5" stroke="#000" stroke-width="1.25"/></svg>
<div style="left:212px;top:121px;width:42px;height:20px;background:linear-gradient(#fafafa,#e2e2e2);border:1px solid #b4b4b4;border-bottom:none;clip-path:polygon(6px 0,100% 0,100% 100%,0 100%,0 6px);"></div>
<svg style="position:absolute;left:212px;top:121px;" width="7" height="7" viewBox="0 0 7 7"><path d="M0.5 6.5 L6.5 0.5" stroke="#b4b4b4"/></svg>
<div style="left:255px;top:121px;width:48px;height:20px;background:#f7f7f7;border-left:1px solid #b4b4b4;border-right:1px solid #b4b4b4;clip-path:polygon(6px 0,100% 0,100% 100%,0 100%,0 6px);"></div>
<div style="left:260px;top:121px;width:43px;height:3px;background:#2b579a;"></div>
<svg style="position:absolute;left:255px;top:121px;" width="7" height="7" viewBox="0 0 7 7"><path d="M0.5 6.5 L6.5 0.5" stroke="#b4b4b4"/></svg>
<div style="left:303px;top:121px;width:59px;height:20px;background:linear-gradient(#fafafa,#e2e2e2);border:1px solid #b4b4b4;border-bottom:none;clip-path:polygon(6px 0,100% 0,100% 100%,0 100%,0 6px);"></div>
<svg style="position:absolute;left:303px;top:121px;" width="7" height="7" viewBox="0 0 7 7"><path d="M0.5 6.5 L6.5 0.5" stroke="#b4b4b4"/></svg>
<div style="left:219.4px;top:125px;width:34.59px;height:15px;line-height:15px;font-size:11.71px;color:#000;white-space:nowrap;"><u>I</u>zvodi</div>
<div style="left:262px;top:125px;width:40.41px;height:15px;line-height:15px;font-size:11.91px;color:#000;white-space:nowrap;"><u>S</u>tavke</div>
<div style="left:311px;top:125px;width:50.02px;height:15px;line-height:15px;font-size:11.34px;color:#000;white-space:nowrap;"><u>K</u>njiženja</div>
<div style="left:212px;top:141px;width:1012px;height:608px;border:1px solid #1f4aa0;background:#fff;"></div>
<div style="left:213px;top:142px;width:1010px;height:19px;background:linear-gradient(#f5f5f5,#ececec);"></div>
<div style="left:285px;top:144px;width:1px;height:15px;background:#7a9dd8;"></div>
<div style="left:366px;top:144px;width:1px;height:15px;background:#7a9dd8;"></div>
<div style="left:399px;top:144px;width:1px;height:15px;background:#7a9dd8;"></div>
<div style="left:509px;top:144px;width:1px;height:15px;background:#7a9dd8;"></div>
<div style="left:542px;top:144px;width:1px;height:15px;background:#7a9dd8;"></div>
<div style="left:652px;top:144px;width:1px;height:15px;background:#7a9dd8;"></div>
<div style="left:714px;top:144px;width:1px;height:15px;background:#7a9dd8;"></div>
<div style="left:774px;top:144px;width:1px;height:15px;background:#7a9dd8;"></div>
<div style="left:845px;top:144px;width:1px;height:15px;background:#7a9dd8;"></div>
<div style="left:927px;top:144px;width:1px;height:15px;background:#7a9dd8;"></div>
<div style="left:987px;top:144px;width:1px;height:15px;background:#7a9dd8;"></div>
<div style="left:1047px;top:144px;width:1px;height:15px;background:#7a9dd8;"></div>
<div style="left:1147px;top:144px;width:1px;height:15px;background:#7a9dd8;"></div>
<div style="left:215.5px;top:144.8px;width:58.99px;height:15px;line-height:15px;font-size:11.8px;color:#000;white-space:nowrap;letter-spacing:-0.013px;">Zaduženje</div>
<div style="left:296.8px;top:144.8px;width:61.24px;height:15px;line-height:15px;font-size:11.8px;color:#000;white-space:nowrap;letter-spacing:0.237px;">Odobrenje</div>
<div style="left:369.5px;top:144.8px;width:26.7px;height:15px;line-height:15px;font-size:11.8px;color:#000;white-space:nowrap;letter-spacing:-0.299px;">MdZ</div>
<div style="left:414.5px;top:144.8px;width:84.05px;height:15px;line-height:15px;font-size:11.8px;color:#000;white-space:nowrap;letter-spacing:0.049px;">Broj Zaduženja</div>
<div style="left:513.5px;top:144.8px;width:27.82px;height:15px;line-height:15px;font-size:11.8px;color:#000;white-space:nowrap;letter-spacing:-0.585px;">MdO</div>
<div style="left:556.8px;top:144.8px;width:85.77px;height:15px;line-height:15px;font-size:11.8px;color:#000;white-space:nowrap;letter-spacing:0.172px;">Broj Odobrenja</div>
<div style="left:666.5px;top:144.8px;width:37.04px;height:15px;line-height:15px;font-size:11.8px;color:#000;white-space:nowrap;letter-spacing:0.441px;">Konto</div>
<div style="left:723px;top:144.8px;width:46.57px;height:15px;line-height:15px;font-size:11.8px;color:#000;white-space:nowrap;letter-spacing:-0.225px;">Analitika</div>
<div style="left:777.5px;top:144.8px;width:59.42px;height:15px;line-height:15px;font-size:11.8px;color:#000;white-space:nowrap;letter-spacing:-0.182px;">KEPU Obj.</div>
<div style="left:860.5px;top:144.8px;width:54.61px;height:15px;line-height:15px;font-size:11.8px;color:#000;white-space:nowrap;letter-spacing:0.013px;">Dok.Veza</div>
<div style="left:930.5px;top:144.8px;width:56.67px;height:15px;line-height:15px;font-size:11.8px;color:#000;white-space:nowrap;letter-spacing:0.074px;">Mes.Troš.</div>
<div style="left:999.5px;top:144.8px;width:40.02px;height:15px;line-height:15px;font-size:11.8px;color:#000;white-space:nowrap;letter-spacing:-0.382px;">Nosilac</div>
<div style="left:1086.5px;top:144.8px;width:25.25px;height:15px;line-height:15px;font-size:11.8px;color:#000;white-space:nowrap;letter-spacing:-0.754px;">Opis</div>
<div style="left:1150.5px;top:144.8px;width:64.1px;height:15px;line-height:15px;font-size:11.8px;color:#000;white-space:nowrap;letter-spacing:0.096px;">Kontni plan</div>
<div style="left:213px;top:161px;width:1009px;height:18px;background:#4376c9;"></div>
<div style="left:213px;top:179px;width:1009px;height:1px;background:#a0a0a0;"></div>
<div style="left:213px;top:197px;width:1009px;height:1px;background:#a0a0a0;"></div>
<div style="left:213px;top:215px;width:1009px;height:1px;background:#a0a0a0;"></div>
<div style="left:213px;top:233px;width:1009px;height:1px;background:#a0a0a0;"></div>
<div style="left:213px;top:251px;width:1009px;height:1px;background:#a0a0a0;"></div>
<div style="left:213px;top:269px;width:1009px;height:1px;background:#a0a0a0;"></div>
<div style="left:213px;top:287px;width:1009px;height:1px;background:#a0a0a0;"></div>
<div style="left:213px;top:305px;width:1009px;height:1px;background:#a0a0a0;"></div>
<div style="left:213px;top:323px;width:1009px;height:1px;background:#a0a0a0;"></div>
<div style="left:213px;top:341px;width:1009px;height:1px;background:#a0a0a0;"></div>
<div style="left:213px;top:359px;width:1009px;height:1px;background:#a0a0a0;"></div>
<div style="left:213px;top:377px;width:1009px;height:1px;background:#a0a0a0;"></div>
<div style="left:213px;top:395px;width:1009px;height:1px;background:#a0a0a0;"></div>
<div style="left:213px;top:162px;width:1009px;height:1px;background-image:linear-gradient(90deg,#c9a24a 50%,transparent 50%);background-size:2px 1px;"></div>
<div style="left:213px;top:178px;width:1009px;height:1px;background-image:linear-gradient(90deg,#c9a24a 50%,transparent 50%);background-size:2px 1px;"></div>
<div style="left:285px;top:160px;width:1px;height:235px;background:#a0a0a0;"></div>
<div style="left:366px;top:160px;width:1px;height:235px;background:#a0a0a0;"></div>
<div style="left:399px;top:160px;width:1px;height:235px;background:#a0a0a0;"></div>
<div style="left:509px;top:160px;width:1px;height:235px;background:#a0a0a0;"></div>
<div style="left:542px;top:160px;width:1px;height:235px;background:#a0a0a0;"></div>
<div style="left:652px;top:160px;width:1px;height:235px;background:#a0a0a0;"></div>
<div style="left:714px;top:160px;width:1px;height:235px;background:#a0a0a0;"></div>
<div style="left:774px;top:160px;width:1px;height:235px;background:#a0a0a0;"></div>
<div style="left:845px;top:160px;width:1px;height:235px;background:#a0a0a0;"></div>
<div style="left:927px;top:160px;width:1px;height:235px;background:#a0a0a0;"></div>
<div style="left:987px;top:160px;width:1px;height:235px;background:#a0a0a0;"></div>
<div style="left:1047px;top:160px;width:1px;height:235px;background:#a0a0a0;"></div>
<div style="left:1147px;top:160px;width:1px;height:235px;background:#a0a0a0;"></div>
<div style="left:224.45px;top:164px;width:59.05px;height:14px;line-height:14px;font-size:11px;color:#fff;white-space:nowrap;text-align:right;">128.551,67</div>
<div style="left:339.09px;top:164px;width:25.41px;height:14px;line-height:14px;font-size:11px;color:#fff;white-space:nowrap;text-align:right;">0,00</div>
<div style="left:401px;top:164px;width:28.47px;height:14px;line-height:14px;font-size:11px;color:#fff;white-space:nowrap;">3885</div>
<div style="left:655px;top:164px;width:28.47px;height:14px;line-height:14px;font-size:11px;color:#fff;white-space:nowrap;">4350</div>
<div style="left:716px;top:164px;width:43.74px;height:14px;line-height:14px;font-size:11px;color:#fff;white-space:nowrap;letter-spacing:-0.264px;">P-10348</div>
<div style="left:848px;top:164px;width:28.47px;height:14px;line-height:14px;font-size:11px;color:#fff;white-space:nowrap;">3885</div>
<div style="left:1049.5px;top:164px;width:69.17px;height:14px;line-height:14px;font-size:11px;color:#fff;white-space:nowrap;letter-spacing:0.168px;">Izvod br. 136</div>
<div style="left:1149px;top:164px;width:63.12px;height:14px;line-height:14px;font-size:11px;color:#fff;white-space:nowrap;letter-spacing:-0.875px;">KPL2014PDP</div>
<div style="left:230.57px;top:182px;width:52.93px;height:14px;line-height:14px;font-size:11px;color:#000;white-space:nowrap;text-align:right;">55.444,49</div>
<div style="left:339.09px;top:182px;width:25.41px;height:14px;line-height:14px;font-size:11px;color:#000;white-space:nowrap;text-align:right;">0,00</div>
<div style="left:401px;top:182px;width:22.35px;height:14px;line-height:14px;font-size:11px;color:#000;white-space:nowrap;">334</div>
<div style="left:655px;top:182px;width:28.47px;height:14px;line-height:14px;font-size:11px;color:#000;white-space:nowrap;">4350</div>
<div style="left:716px;top:182px;width:43.74px;height:14px;line-height:14px;font-size:11px;color:#000;white-space:nowrap;letter-spacing:-0.264px;">P-10034</div>
<div style="left:848px;top:182px;width:22.35px;height:14px;line-height:14px;font-size:11px;color:#000;white-space:nowrap;">334</div>
<div style="left:1049.5px;top:182px;width:69.17px;height:14px;line-height:14px;font-size:11px;color:#000;white-space:nowrap;letter-spacing:0.168px;">Izvod br. 136</div>
<div style="left:1149px;top:182px;width:63.12px;height:14px;line-height:14px;font-size:11px;color:#000;white-space:nowrap;letter-spacing:-0.875px;">KPL2014PDP</div>
<div style="left:230.57px;top:200px;width:52.93px;height:14px;line-height:14px;font-size:11px;color:#000;white-space:nowrap;text-align:right;">29.203,59</div>
<div style="left:339.09px;top:200px;width:25.41px;height:14px;line-height:14px;font-size:11px;color:#000;white-space:nowrap;text-align:right;">0,00</div>
<div style="left:401px;top:200px;width:28.47px;height:14px;line-height:14px;font-size:11px;color:#000;white-space:nowrap;">9137</div>
<div style="left:655px;top:200px;width:28.47px;height:14px;line-height:14px;font-size:11px;color:#000;white-space:nowrap;">4350</div>
<div style="left:716px;top:200px;width:43.74px;height:14px;line-height:14px;font-size:11px;color:#000;white-space:nowrap;letter-spacing:-0.264px;">P-10507</div>
<div style="left:848px;top:200px;width:28.47px;height:14px;line-height:14px;font-size:11px;color:#000;white-space:nowrap;">9137</div>
<div style="left:1049.5px;top:200px;width:69.17px;height:14px;line-height:14px;font-size:11px;color:#000;white-space:nowrap;letter-spacing:0.168px;">Izvod br. 136</div>
<div style="left:1149px;top:200px;width:63.12px;height:14px;line-height:14px;font-size:11px;color:#000;white-space:nowrap;letter-spacing:-0.875px;">KPL2014PDP</div>
<div style="left:230.57px;top:218px;width:52.93px;height:14px;line-height:14px;font-size:11px;color:#000;white-space:nowrap;text-align:right;">22.718,64</div>
<div style="left:339.09px;top:218px;width:25.41px;height:14px;line-height:14px;font-size:11px;color:#000;white-space:nowrap;text-align:right;">0,00</div>
<div style="left:401px;top:218px;width:22.35px;height:14px;line-height:14px;font-size:11px;color:#000;white-space:nowrap;">468</div>
<div style="left:655px;top:218px;width:28.47px;height:14px;line-height:14px;font-size:11px;color:#000;white-space:nowrap;">4350</div>
<div style="left:716px;top:218px;width:43.74px;height:14px;line-height:14px;font-size:11px;color:#000;white-space:nowrap;letter-spacing:-0.264px;">P-10482</div>
<div style="left:848px;top:218px;width:22.35px;height:14px;line-height:14px;font-size:11px;color:#000;white-space:nowrap;">468</div>
<div style="left:1049.5px;top:218px;width:69.17px;height:14px;line-height:14px;font-size:11px;color:#000;white-space:nowrap;letter-spacing:0.168px;">Izvod br. 136</div>
<div style="left:1149px;top:218px;width:63.12px;height:14px;line-height:14px;font-size:11px;color:#000;white-space:nowrap;letter-spacing:-0.875px;">KPL2014PDP</div>
<div style="left:230.57px;top:236px;width:52.93px;height:14px;line-height:14px;font-size:11px;color:#000;white-space:nowrap;text-align:right;">18.726,87</div>
<div style="left:339.09px;top:236px;width:25.41px;height:14px;line-height:14px;font-size:11px;color:#000;white-space:nowrap;text-align:right;">0,00</div>
<div style="left:401px;top:236px;width:22.35px;height:14px;line-height:14px;font-size:11px;color:#000;white-space:nowrap;">923</div>
<div style="left:655px;top:236px;width:28.47px;height:14px;line-height:14px;font-size:11px;color:#000;white-space:nowrap;">4350</div>
<div style="left:716px;top:236px;width:43.74px;height:14px;line-height:14px;font-size:11px;color:#000;white-space:nowrap;letter-spacing:-0.264px;">P-10592</div>
<div style="left:848px;top:236px;width:22.35px;height:14px;line-height:14px;font-size:11px;color:#000;white-space:nowrap;">923</div>
<div style="left:1049.5px;top:236px;width:69.17px;height:14px;line-height:14px;font-size:11px;color:#000;white-space:nowrap;letter-spacing:0.168px;">Izvod br. 136</div>
<div style="left:1149px;top:236px;width:63.12px;height:14px;line-height:14px;font-size:11px;color:#000;white-space:nowrap;letter-spacing:-0.875px;">KPL2014PDP</div>
<div style="left:230.57px;top:254px;width:52.93px;height:14px;line-height:14px;font-size:11px;color:#000;white-space:nowrap;text-align:right;">16.971,97</div>
<div style="left:339.09px;top:254px;width:25.41px;height:14px;line-height:14px;font-size:11px;color:#000;white-space:nowrap;text-align:right;">0,00</div>
<div style="left:401px;top:254px;width:22.35px;height:14px;line-height:14px;font-size:11px;color:#000;white-space:nowrap;">771</div>
<div style="left:655px;top:254px;width:28.47px;height:14px;line-height:14px;font-size:11px;color:#000;white-space:nowrap;">4350</div>
<div style="left:716px;top:254px;width:43.74px;height:14px;line-height:14px;font-size:11px;color:#000;white-space:nowrap;letter-spacing:-0.264px;">P-10588</div>
<div style="left:848px;top:254px;width:22.35px;height:14px;line-height:14px;font-size:11px;color:#000;white-space:nowrap;">771</div>
<div style="left:1049.5px;top:254px;width:69.17px;height:14px;line-height:14px;font-size:11px;color:#000;white-space:nowrap;letter-spacing:0.168px;">Izvod br. 136</div>
<div style="left:1149px;top:254px;width:63.12px;height:14px;line-height:14px;font-size:11px;color:#000;white-space:nowrap;letter-spacing:-0.875px;">KPL2014PDP</div>
<div style="left:230.57px;top:272px;width:52.93px;height:14px;line-height:14px;font-size:11px;color:#000;white-space:nowrap;text-align:right;">13.208,44</div>
<div style="left:339.09px;top:272px;width:25.41px;height:14px;line-height:14px;font-size:11px;color:#000;white-space:nowrap;text-align:right;">0,00</div>
<div style="left:401px;top:272px;width:22.35px;height:14px;line-height:14px;font-size:11px;color:#000;white-space:nowrap;">387</div>
<div style="left:655px;top:272px;width:28.47px;height:14px;line-height:14px;font-size:11px;color:#000;white-space:nowrap;">4350</div>
<div style="left:716px;top:272px;width:43.74px;height:14px;line-height:14px;font-size:11px;color:#000;white-space:nowrap;letter-spacing:-0.264px;">P-10563</div>
<div style="left:848px;top:272px;width:22.35px;height:14px;line-height:14px;font-size:11px;color:#000;white-space:nowrap;">387</div>
<div style="left:1049.5px;top:272px;width:69.17px;height:14px;line-height:14px;font-size:11px;color:#000;white-space:nowrap;letter-spacing:0.168px;">Izvod br. 136</div>
<div style="left:1149px;top:272px;width:63.12px;height:14px;line-height:14px;font-size:11px;color:#000;white-space:nowrap;letter-spacing:-0.875px;">KPL2014PDP</div>
<div style="left:237.5px;top:290px;width:46px;height:14px;line-height:14px;font-size:11px;color:#000;white-space:nowrap;text-align:right;">9.026,11</div>
<div style="left:339.09px;top:290px;width:25.41px;height:14px;line-height:14px;font-size:11px;color:#000;white-space:nowrap;text-align:right;">0,00</div>
<div style="left:401px;top:290px;width:22.35px;height:14px;line-height:14px;font-size:11px;color:#000;white-space:nowrap;">796</div>
<div style="left:655px;top:290px;width:28.47px;height:14px;line-height:14px;font-size:11px;color:#000;white-space:nowrap;">4350</div>
<div style="left:716px;top:290px;width:43.74px;height:14px;line-height:14px;font-size:11px;color:#000;white-space:nowrap;letter-spacing:-0.264px;">P-00061</div>
<div style="left:848px;top:290px;width:22.35px;height:14px;line-height:14px;font-size:11px;color:#000;white-space:nowrap;">796</div>
<div style="left:1049.5px;top:290px;width:69.17px;height:14px;line-height:14px;font-size:11px;color:#000;white-space:nowrap;letter-spacing:0.168px;">Izvod br. 136</div>
<div style="left:1149px;top:290px;width:63.12px;height:14px;line-height:14px;font-size:11px;color:#000;white-space:nowrap;letter-spacing:-0.875px;">KPL2014PDP</div>
<div style="left:236.69px;top:308px;width:46.81px;height:14px;line-height:14px;font-size:11px;color:#000;white-space:nowrap;text-align:right;">8.515,17</div>
<div style="left:339.09px;top:308px;width:25.41px;height:14px;line-height:14px;font-size:11px;color:#000;white-space:nowrap;text-align:right;">0,00</div>
<div style="left:401px;top:308px;width:22.35px;height:14px;line-height:14px;font-size:11px;color:#000;white-space:nowrap;">012</div>
<div style="left:655px;top:308px;width:28.47px;height:14px;line-height:14px;font-size:11px;color:#000;white-space:nowrap;">4350</div>
<div style="left:716px;top:308px;width:43.74px;height:14px;line-height:14px;font-size:11px;color:#000;white-space:nowrap;letter-spacing:-0.264px;">P-10547</div>
<div style="left:848px;top:308px;width:22.35px;height:14px;line-height:14px;font-size:11px;color:#000;white-space:nowrap;">012</div>
<div style="left:1049.5px;top:308px;width:69.17px;height:14px;line-height:14px;font-size:11px;color:#000;white-space:nowrap;letter-spacing:0.168px;">Izvod br. 136</div>
<div style="left:1149px;top:308px;width:63.12px;height:14px;line-height:14px;font-size:11px;color:#000;white-space:nowrap;letter-spacing:-0.875px;">KPL2014PDP</div>
<div style="left:236.69px;top:326px;width:46.81px;height:14px;line-height:14px;font-size:11px;color:#000;white-space:nowrap;text-align:right;">7.274,17</div>
<div style="left:339.09px;top:326px;width:25.41px;height:14px;line-height:14px;font-size:11px;color:#000;white-space:nowrap;text-align:right;">0,00</div>
<div style="left:401px;top:326px;width:22.35px;height:14px;line-height:14px;font-size:11px;color:#000;white-space:nowrap;">330</div>
<div style="left:655px;top:326px;width:28.47px;height:14px;line-height:14px;font-size:11px;color:#000;white-space:nowrap;">4350</div>
<div style="left:716px;top:326px;width:43.74px;height:14px;line-height:14px;font-size:11px;color:#000;white-space:nowrap;letter-spacing:-0.264px;">P-10318</div>
<div style="left:848px;top:326px;width:22.35px;height:14px;line-height:14px;font-size:11px;color:#000;white-space:nowrap;">330</div>
<div style="left:1049.5px;top:326px;width:69.17px;height:14px;line-height:14px;font-size:11px;color:#000;white-space:nowrap;letter-spacing:0.168px;">Izvod br. 136</div>
<div style="left:1149px;top:326px;width:63.12px;height:14px;line-height:14px;font-size:11px;color:#000;white-space:nowrap;letter-spacing:-0.875px;">KPL2014PDP</div>
<div style="left:236.69px;top:344px;width:46.81px;height:14px;line-height:14px;font-size:11px;color:#000;white-space:nowrap;text-align:right;">7.161,29</div>
<div style="left:339.09px;top:344px;width:25.41px;height:14px;line-height:14px;font-size:11px;color:#000;white-space:nowrap;text-align:right;">0,00</div>
<div style="left:401px;top:344px;width:59.05px;height:14px;line-height:14px;font-size:11px;color:#000;white-space:nowrap;">100776101</div>
<div style="left:655px;top:344px;width:28.47px;height:14px;line-height:14px;font-size:11px;color:#000;white-space:nowrap;">4350</div>
<div style="left:716px;top:344px;width:43.74px;height:14px;line-height:14px;font-size:11px;color:#000;white-space:nowrap;letter-spacing:-0.264px;">P-10367</div>
<div style="left:848px;top:344px;width:59.05px;height:14px;line-height:14px;font-size:11px;color:#000;white-space:nowrap;">100776101</div>
<div style="left:1049.5px;top:344px;width:69.17px;height:14px;line-height:14px;font-size:11px;color:#000;white-space:nowrap;letter-spacing:0.168px;">Izvod br. 136</div>
<div style="left:1149px;top:344px;width:63.12px;height:14px;line-height:14px;font-size:11px;color:#000;white-space:nowrap;letter-spacing:-0.875px;">KPL2014PDP</div>
<div style="left:245.86px;top:362px;width:37.64px;height:14px;line-height:14px;font-size:11px;color:#000;white-space:nowrap;text-align:right;">200,00</div>
<div style="left:339.09px;top:362px;width:25.41px;height:14px;line-height:14px;font-size:11px;color:#000;white-space:nowrap;text-align:right;">0,00</div>
<div style="left:401px;top:362px;width:46.82px;height:14px;line-height:14px;font-size:11px;color:#000;white-space:nowrap;">0210800</div>
<div style="left:655px;top:362px;width:28.47px;height:14px;line-height:14px;font-size:11px;color:#000;white-space:nowrap;">5530</div>
<div style="left:848px;top:362px;width:46.82px;height:14px;line-height:14px;font-size:11px;color:#000;white-space:nowrap;">0210800</div>
<div style="left:1049.5px;top:362px;width:69.17px;height:14px;line-height:14px;font-size:11px;color:#000;white-space:nowrap;letter-spacing:0.168px;">Izvod br. 136</div>
<div style="left:1149px;top:362px;width:63.12px;height:14px;line-height:14px;font-size:11px;color:#000;white-space:nowrap;letter-spacing:-0.875px;">KPL2014PDP</div>
<div style="left:245.86px;top:380px;width:37.64px;height:14px;line-height:14px;font-size:11px;color:#000;white-space:nowrap;text-align:right;">200,00</div>
<div style="left:339.09px;top:380px;width:25.41px;height:14px;line-height:14px;font-size:11px;color:#000;white-space:nowrap;text-align:right;">0,00</div>
<div style="left:401px;top:380px;width:46.82px;height:14px;line-height:14px;font-size:11px;color:#000;white-space:nowrap;">0210800</div>
<div style="left:655px;top:380px;width:28.47px;height:14px;line-height:14px;font-size:11px;color:#000;white-space:nowrap;">5530</div>
<div style="left:848px;top:380px;width:46.82px;height:14px;line-height:14px;font-size:11px;color:#000;white-space:nowrap;">0210800</div>
<div style="left:1049.5px;top:380px;width:69.17px;height:14px;line-height:14px;font-size:11px;color:#000;white-space:nowrap;letter-spacing:0.168px;">Izvod br. 136</div>
<div style="left:1149px;top:380px;width:63.12px;height:14px;line-height:14px;font-size:11px;color:#000;white-space:nowrap;letter-spacing:-0.875px;">KPL2014PDP</div>
<div style="left:213px;top:704px;width:1010px;height:1px;background:#5086d4;"></div>
<div style="left:213px;top:705px;width:1010px;height:23px;background:#dcdcdc;"></div>
<div style="left:213px;top:707px;width:71px;height:19px;background:#f0f0f0;border:1px solid #7d9fd6;"></div>
<div style="left:220.95px;top:709.5px;width:59.05px;height:14px;line-height:14px;font-size:11px;color:#000;white-space:nowrap;text-align:right;">317.202,41</div>
<div style="left:288px;top:707px;width:77px;height:19px;background:#f0f0f0;border:1px solid #7d9fd6;"></div>
<div style="left:335.59px;top:709.5px;width:25.41px;height:14px;line-height:14px;font-size:11px;color:#000;white-space:nowrap;text-align:right;">0,00</div>
<div style="left:213px;top:728px;width:1010px;height:1px;background:#5086d4;"></div>
<div style="left:213px;top:729px;width:1010px;height:19px;background:#f0f0f0;"></div>
<div style="left:213px;top:729px;width:312px;height:19px;background:#fbfbfb;"></div>
<div style="left:214px;top:730px;width:15px;height:17px;background:#f0f0f0;"></div>
<svg style="position:absolute;left:217px;top:734px;" width="10" height="9" viewBox="0 0 10 9"><rect x="0" y="0" width="1.6" height="9" fill="#b8b8b8"/><path d="M5.5 0 L1.6 4.5 L5.5 9Z M9.5 0 L5.6 4.5 L9.5 9Z" fill="#b8b8b8"/></svg>
<div style="left:231px;top:730px;width:15px;height:17px;background:#f0f0f0;"></div>
<svg style="position:absolute;left:234px;top:734px;" width="9" height="9" viewBox="0 0 9 9"><path d="M4.5 0 L0.5 4.5 L4.5 9Z M8.5 0 L4.5 4.5 L8.5 9Z" fill="#b8b8b8"/></svg>
<div style="left:248px;top:730px;width:15px;height:17px;background:#f0f0f0;"></div>
<svg style="position:absolute;left:253px;top:734px;" width="5" height="9" viewBox="0 0 5 9"><path d="M4.5 0 L0.5 4.5 L4.5 9Z" fill="#b8b8b8"/></svg>
<div style="left:322px;top:730px;width:15px;height:17px;background:#dadada;"></div>
<svg style="position:absolute;left:327px;top:734px;" width="5" height="9" viewBox="0 0 5 9"><path d="M0.5 0 L4.5 4.5 L0.5 9Z" fill="#000"/></svg>
<div style="left:339px;top:730px;width:15px;height:17px;background:#dadada;"></div>
<svg style="position:absolute;left:342px;top:734px;" width="9" height="9" viewBox="0 0 9 9"><path d="M0.5 0 L4.5 4.5 L0.5 9Z M4.5 0 L8.5 4.5 L4.5 9Z" fill="#000"/></svg>
<div style="left:356px;top:730px;width:15px;height:17px;background:#dadada;"></div>
<svg style="position:absolute;left:358px;top:734px;" width="10" height="9" viewBox="0 0 10 9"><path d="M0 0 L3.9 4.5 L0 9Z M4 0 L7.9 4.5 L4 9Z" fill="#000"/><rect x="8" y="0" width="1.6" height="9" fill="#000"/></svg>
<div style="left:373px;top:730px;width:15px;height:17px;background:#f0f0f0;"></div>
<svg style="position:absolute;left:376px;top:734px;" width="9" height="9" viewBox="0 0 9 9"><path d="M4.5 0 V9 M0 4.5 H9" stroke="#b8b8b8" stroke-width="2"/></svg>
<div style="left:390px;top:730px;width:15px;height:17px;background:#f0f0f0;"></div>
<svg style="position:absolute;left:393px;top:737.5px;" width="9" height="2" viewBox="0 0 9 2"><path d="M0 1 H9" stroke="#b8b8b8" stroke-width="2"/></svg>
<div style="left:407px;top:730px;width:15px;height:17px;background:#f0f0f0;"></div>
<svg style="position:absolute;left:411px;top:735.5px;" width="8" height="5" viewBox="0 0 8 5"><path d="M0 4.5 L4 0.5 L8 4.5Z" fill="#b8b8b8"/></svg>
<div style="left:424px;top:730px;width:15px;height:17px;background:#f0f0f0;"></div>
<svg style="position:absolute;left:427px;top:734px;" width="10" height="8" viewBox="0 0 10 8"><path d="M0.8 3.8 L3.8 6.8 L9.5 1" fill="none" stroke="#b8b8b8" stroke-width="2"/></svg>
<div style="left:441px;top:730px;width:15px;height:17px;background:#f0f0f0;"></div>
<svg style="position:absolute;left:444px;top:733.5px;" width="9" height="9" viewBox="0 0 9 9"><path d="M0.5 0.5 L8.5 8.5 M8.5 0.5 L0.5 8.5" stroke="#b8b8b8" stroke-width="1.9"/></svg>
<div style="left:458px;top:730px;width:15px;height:17px;background:#dadada;"></div>
<svg style="position:absolute;left:460.5px;top:734px;" width="10" height="8" viewBox="0 0 10 8"><path d="M1 6.5 Q1 2 5 2 Q7.5 2 8.5 4" fill="none" stroke="#000" stroke-width="1.6"/><path d="M5.8 4 L9.8 7.5 L10 2.6Z" fill="#000"/></svg>
<div style="left:475px;top:730px;width:15px;height:17px;background:#dadada;"></div>
<svg style="position:absolute;left:478px;top:733.5px;" width="9" height="9" viewBox="0 0 9 9"><path d="M4.5 0 V9 M0 4.5 H9 M1.3 1.3 L7.7 7.7 M7.7 1.3 L1.3 7.7" stroke="#000" stroke-width="1.2"/><circle cx="4.5" cy="4.5" r="1.6" fill="#000"/></svg>
<div style="left:492px;top:730px;width:15px;height:17px;background:#f0f0f0;"></div>
<svg style="position:absolute;left:494px;top:732.5px;" width="12" height="11" viewBox="0 0 12 11"><path d="M0 0 L2.6 2.2 L0 4.4Z" fill="#b8b8b8"/><path d="M7 2.5 V11 M2.8 6.7 H11.2 M4 3.7 L10 9.7 M10 3.7 L4 9.7" stroke="#b8b8b8" stroke-width="1.1"/></svg>
<div style="left:509px;top:730px;width:15px;height:17px;background:#f0f0f0;"></div>
<svg style="position:absolute;left:513px;top:734px;" width="8" height="9" viewBox="0 0 8 9"><path d="M0 0.5 H8 V2 L5 4.5 V8.5 H3 V4.5 L0 2Z" fill="#b8b8b8"/></svg>
<div style="left:271.5px;top:730.5px;width:46.1px;height:16px;line-height:16px;font-size:12.62px;color:#000;white-space:nowrap;">1 od 13</div>
<div style="left:525px;top:730px;width:697px;height:17px;background:#f0f0f0;"></div>
<div style="left:848px;top:730px;width:358px;height:17px;background:#cdcdcd;"></div>
<svg style="position:absolute;left:579.5px;top:734px;" width="6" height="9" viewBox="0 0 6 9"><path d="M5 0.8 L1.2 4.5 L5 8.2" fill="none" stroke="#3a3a3a" stroke-width="1.8"/></svg>
<svg style="position:absolute;left:1211.5px;top:734px;" width="6" height="9" viewBox="0 0 6 9"><path d="M1 0.8 L4.8 4.5 L1 8.2" fill="none" stroke="#4a4a4a" stroke-width="1.8"/></svg>
<div style="left:211px;top:749px;width:1014px;height:60px;background:#f0f0f0;"></div>
<div style="left:213px;top:750px;width:102px;height:28px;background:linear-gradient(#fafafa,#ebebeb);border:1px solid #d2d2d2;"></div>
<div style="left:217px;top:757.8px;width:11px;height:11px;border:1px solid #333;background:#fff;"></div>
<div style="left:233px;top:757px;width:55.13px;height:14px;line-height:14px;font-size:10.7px;color:#000;white-space:nowrap;">F2-Izmene</div>
<div style="left:317px;top:750px;width:142px;height:28px;background:linear-gradient(#fafafa,#ebebeb);border:1px solid #d2d2d2;"></div>
<div style="left:321px;top:757.8px;width:11px;height:11px;border:1px solid #333;background:#fff;"></div>
<div style="left:337px;top:757.5px;width:102.03px;height:13px;line-height:13px;font-size:10.27px;color:#000;white-space:nowrap;">Prikaz "BALONČIĆA"</div>
<div style="left:461px;top:750px;width:342px;height:28px;background:linear-gradient(#fafafa,#ebebeb);border:1px solid #d2d2d2;"></div>
<div style="left:464px;top:758.1px;width:273.08px;height:13px;line-height:13px;font-size:10.25px;color:#000;white-space:nowrap;">205000000010446988 DUVAN PRODUKT DOO,NEGOTIN</div>
<div style="left:805px;top:750px;width:122px;height:28px;background:linear-gradient(#fafafa,#ebebeb);border:1px solid #d2d2d2;"></div>
<div style="left:809.6px;top:757px;width:82.43px;height:14px;line-height:14px;font-size:10.53px;color:#000;white-space:nowrap;">Stani kod greške</div>
<div style="left:912px;top:757.8px;width:11px;height:11px;border:1px solid #333;background:#fff;"></div>
<div style="left:928px;top:750px;width:152px;height:28px;background:linear-gradient(#fafafa,#ebebeb);border:1px solid #d2d2d2;"></div>
<div style="left:930px;top:752px;width:149px;height:24px;background:#e1e1e1;border:1px solid #adadad;"></div>
<div style="left:933px;top:755.5px;width:147.47px;height:17px;line-height:17px;font-size:13.26px;color:#000;white-space:nowrap;">F11 - Automat.kontiranje</div>
<div style="left:1082px;top:750px;width:142px;height:28px;background:linear-gradient(#fafafa,#ebebeb);border:1px solid #d2d2d2;"></div>
<div style="left:1085px;top:752px;width:138px;height:24px;background:#e1e1e1;border:1px solid #adadad;"></div>
<div style="left:1092px;top:756px;width:122.38px;height:16px;line-height:16px;font-size:12.68px;color:#000;white-space:nowrap;">F8 - Otvorene stavke</div>
<div style="left:213px;top:780px;width:102px;height:28px;background:linear-gradient(#fafafa,#ebebeb);border:1px solid #d2d2d2;"></div>
<div style="left:215px;top:781px;width:98px;height:25px;background:#e1e1e1;border:1px solid #adadad;"></div>
<div style="left:229.4px;top:785px;width:72.6px;height:17px;line-height:17px;font-size:12.99px;color:#000;white-space:nowrap;">Objašnjenje</div>
<div style="left:317px;top:780px;width:132px;height:28px;background:linear-gradient(#fafafa,#ebebeb);border:1px solid #d2d2d2;"></div>
<div style="left:319px;top:781px;width:128px;height:25px;background:#e1e1e1;border:1px solid #adadad;"></div>
<div style="left:337px;top:785.5px;width:94.4px;height:16px;line-height:16px;font-size:12.61px;color:#000;white-space:nowrap;">Obriši sva konta</div>
<div style="left:451px;top:780px;width:670px;height:28px;background:linear-gradient(#fafafa,#ebebeb);border:1px solid #d2d2d2;"></div>
<div style="left:576px;top:787px;width:422.93px;height:14px;line-height:14px;font-size:10.68px;color:#000;white-space:nowrap;">200247812020192227,Izvod br. 136 od 02.08.21, Klijent 6 - ULJARICA NOVA,NEGOTIN</div>
<div style="left:1122px;top:780px;width:102px;height:28px;background:linear-gradient(#fafafa,#ebebeb);border:1px solid #d2d2d2;"></div>
<div style="left:1125px;top:782px;width:98px;height:24px;background:#e1e1e1;border:1px solid #adadad;"></div>
<div style="left:1154px;top:785.5px;width:42.41px;height:16px;line-height:16px;font-size:12.57px;color:#000;white-space:nowrap;">Zatvori</div>
<div style="left:1224px;top:93px;width:1px;height:716px;background:#a0a0a0;"></div>
<div style="left:1225px;top:93px;width:1px;height:716px;background:#3d63a6;"></div>
<div style="left:1226px;top:94px;width:209px;height:715px;background:#f0f0f0;"></div>
<div style="left:1226px;top:120px;width:1px;height:664px;background:#a8a8a8;"></div>
<div style="left:1226px;top:119px;width:209px;height:1px;background:#a9a9a9;"></div>
<div style="left:1227px;top:95px;width:46px;height:25px;background:#f7f7f7;border-left:1px solid #b4b4b4;border-right:1px solid #b4b4b4;clip-path:polygon(6px 0,100% 0,100% 100%,0 100%,0 6px);"></div>
<div style="left:1232px;top:95px;width:41px;height:3px;background:#2b579a;"></div>
<div style="left:1274px;top:96px;width:48px;height:23px;background:linear-gradient(#fbfbfb,#e2e2e2);border:1px solid #b4b4b4;border-bottom:none;clip-path:polygon(6px 0,100% 0,100% 100%,0 100%,0 6px);"></div>
<svg style="position:absolute;left:1274px;top:96px;" width="7" height="7" viewBox="0 0 7 7"><path d="M0.5 6.5 L6.5 0.5" stroke="#b4b4b4"/></svg>
<div style="left:1323px;top:96px;width:71px;height:23px;background:linear-gradient(#fbfbfb,#e2e2e2);border:1px solid #b4b4b4;border-bottom:none;clip-path:polygon(6px 0,100% 0,100% 100%,0 100%,0 6px);"></div>
<svg style="position:absolute;left:1323px;top:96px;" width="7" height="7" viewBox="0 0 7 7"><path d="M0.5 6.5 L6.5 0.5" stroke="#b4b4b4"/></svg>
<div style="left:1395px;top:96px;width:25px;height:23px;background:linear-gradient(#fbfbfb,#e2e2e2);border:1px solid #b4b4b4;border-bottom:none;clip-path:polygon(6px 0,100% 0,100% 100%,0 100%,0 6px);"></div>
<svg style="position:absolute;left:1395px;top:96px;" width="7" height="7" viewBox="0 0 7 7"><path d="M0.5 6.5 L6.5 0.5" stroke="#b4b4b4"/></svg>
<div style="left:1233.5px;top:100.5px;width:39.21px;height:16px;line-height:16px;font-size:12.18px;color:#000;white-space:nowrap;">Planer</div>
<div style="left:1280.7px;top:100.5px;width:40.71px;height:16px;line-height:16px;font-size:12.23px;color:#000;white-space:nowrap;">Zadaci</div>
<div style="left:1330px;top:100.5px;width:63.28px;height:16px;line-height:16px;font-size:12.55px;color:#000;white-space:nowrap;">Za štampu</div>
<div style="left:1400px;top:96px;width:35px;height:23px;background:#f0f0f0;"></div>
<div style="left:1401px;top:95px;width:17px;height:17px;background:#f0f0f0;border:1px solid #b8b8b8;"></div>
<svg style="position:absolute;left:1406px;top:99px;" width="6" height="10" viewBox="0 0 6 10"><path d="M5.5 0 L0.5 5 L5.5 10Z" fill="#b0b0b0"/></svg>
<div style="left:1419px;top:95px;width:16px;height:17px;background:#f0f0f0;border:1px solid #b8b8b8;border-right:none;"></div>
<svg style="position:absolute;left:1424px;top:99px;" width="6" height="10" viewBox="0 0 6 10"><path d="M0.5 0 L5.5 5 L0.5 10Z" fill="#000"/></svg>
<div style="left:1271px;top:120px;width:147px;height:23px;background:#fafafa;"></div>
<div style="left:1271px;top:143px;width:147px;height:3px;background:#d2d2d2;"></div>
<div style="left:1296.4px;top:125.5px;width:100.57px;height:16px;line-height:16px;font-size:12.68px;color:#000;white-space:nowrap;">petak, 06. avgust</div>
<div style="left:1226px;top:145px;width:45px;height:1px;background:#a4a4a4;"></div>
<div style="left:1270px;top:120px;width:1px;height:664px;background:#a8a8a8;"></div>
<div style="left:1418px;top:120px;width:17px;height:664px;background:#f0f0f0;"></div>
<div style="left:1419px;top:242px;width:15px;height:381px;background:#cdcdcd;"></div>
<svg style="position:absolute;left:1422px;top:127px;" width="9" height="5" viewBox="0 0 9 5"><path d="M0.8 4.2 L4.5 0.8 L8.2 4.2" fill="none" stroke="#606060" stroke-width="1.4"/></svg>
<svg style="position:absolute;left:1422px;top:773px;" width="9" height="5" viewBox="0 0 9 5"><path d="M0.8 0.8 L4.5 4.2 L8.2 0.8" fill="none" stroke="#606060" stroke-width="1.4"/></svg>
<div style="left:1271px;top:146px;width:147px;height:638px;background:#fff;"></div>
<div style="left:1277px;top:146px;width:1px;height:638px;background:#000;"></div>
<div style="left:1278px;top:167px;width:140px;height:1px;background:#a0a0a0;"></div>
<div style="left:1278px;top:189px;width:140px;height:1px;background:#a0a0a0;"></div>
<div style="left:1278px;top:211px;width:140px;height:1px;background:#a0a0a0;"></div>
<div style="left:1278px;top:233px;width:140px;height:1px;background:#a0a0a0;"></div>
<div style="left:1278px;top:255px;width:140px;height:1px;background:#a0a0a0;"></div>
<div style="left:1278px;top:277px;width:140px;height:1px;background:#a0a0a0;"></div>
<div style="left:1278px;top:299px;width:140px;height:1px;background:#a0a0a0;"></div>
<div style="left:1278px;top:321px;width:140px;height:1px;background:#a0a0a0;"></div>
<div style="left:1278px;top:343px;width:140px;height:1px;background:#a0a0a0;"></div>
<div style="left:1278px;top:365px;width:140px;height:1px;background:#a0a0a0;"></div>
<div style="left:1278px;top:387px;width:140px;height:1px;background:#a0a0a0;"></div>
<div style="left:1278px;top:409px;width:140px;height:1px;background:#a0a0a0;"></div>
<div style="left:1278px;top:431px;width:140px;height:1px;background:#a0a0a0;"></div>
<div style="left:1278px;top:453px;width:140px;height:1px;background:#a0a0a0;"></div>
<div style="left:1278px;top:475px;width:140px;height:1px;background:#a0a0a0;"></div>
<div style="left:1278px;top:497px;width:140px;height:1px;background:#a0a0a0;"></div>
<div style="left:1278px;top:519px;width:140px;height:1px;background:#a0a0a0;"></div>
<div style="left:1278px;top:541px;width:140px;height:1px;background:#a0a0a0;"></div>
<div style="left:1278px;top:563px;width:140px;height:1px;background:#a0a0a0;"></div>
<div style="left:1278px;top:585px;width:140px;height:1px;background:#a0a0a0;"></div>
<div style="left:1278px;top:607px;width:140px;height:1px;background:#a0a0a0;"></div>
<div style="left:1278px;top:629px;width:140px;height:1px;background:#a0a0a0;"></div>
<div style="left:1278px;top:651px;width:140px;height:1px;background:#a0a0a0;"></div>
<div style="left:1278px;top:673px;width:140px;height:1px;background:#a0a0a0;"></div>
<div style="left:1278px;top:695px;width:140px;height:1px;background:#a0a0a0;"></div>
<div style="left:1278px;top:717px;width:140px;height:1px;background:#a0a0a0;"></div>
<div style="left:1278px;top:739px;width:140px;height:1px;background:#a0a0a0;"></div>
<div style="left:1278px;top:761px;width:140px;height:1px;background:#a0a0a0;"></div>
<div style="left:1278px;top:783px;width:140px;height:1px;background:#a0a0a0;"></div>
<div style="left:1253px;top:167px;width:12px;height:1px;background:#a0a0a0;"></div>
<div style="left:1233.5px;top:150px;width:21.8px;height:18px;line-height:18px;font-size:16px;color:#000;white-space:nowrap;">04</div>
<div style="left:1254.6px;top:151.9px;width:13.34px;height:10px;line-height:10px;font-size:8.4px;color:#000;white-space:nowrap;transform:scaleX(0.9);transform-origin:0 50%;">00</div>
<div style="left:1232px;top:189px;width:33px;height:1px;background:#a0a0a0;"></div>
<div style="left:1253px;top:211px;width:12px;height:1px;background:#a0a0a0;"></div>
<div style="left:1233.5px;top:194px;width:21.8px;height:18px;line-height:18px;font-size:16px;color:#000;white-space:nowrap;">05</div>
<div style="left:1254.6px;top:195.9px;width:13.34px;height:10px;line-height:10px;font-size:8.4px;color:#000;white-space:nowrap;transform:scaleX(0.9);transform-origin:0 50%;">00</div>
<div style="left:1232px;top:233px;width:33px;height:1px;background:#a0a0a0;"></div>
<div style="left:1253px;top:255px;width:12px;height:1px;background:#a0a0a0;"></div>
<div style="left:1233.5px;top:238px;width:21.8px;height:18px;line-height:18px;font-size:16px;color:#000;white-space:nowrap;">06</div>
<div style="left:1254.6px;top:239.9px;width:13.34px;height:10px;line-height:10px;font-size:8.4px;color:#000;white-space:nowrap;transform:scaleX(0.9);transform-origin:0 50%;">00</div>
<div style="left:1232px;top:277px;width:33px;height:1px;background:#a0a0a0;"></div>
<div style="left:1253px;top:299px;width:12px;height:1px;background:#a0a0a0;"></div>
<div style="left:1233.5px;top:282px;width:21.8px;height:18px;line-height:18px;font-size:16px;color:#000;white-space:nowrap;">07</div>
<div style="left:1254.6px;top:283.9px;width:13.34px;height:10px;line-height:10px;font-size:8.4px;color:#000;white-space:nowrap;transform:scaleX(0.9);transform-origin:0 50%;">00</div>
<div style="left:1232px;top:321px;width:33px;height:1px;background:#a0a0a0;"></div>
<div style="left:1253px;top:343px;width:12px;height:1px;background:#a0a0a0;"></div>
<div style="left:1233.5px;top:326px;width:21.8px;height:18px;line-height:18px;font-size:16px;color:#000;white-space:nowrap;">08</div>
<div style="left:1254.6px;top:327.9px;width:13.34px;height:10px;line-height:10px;font-size:8.4px;color:#000;white-space:nowrap;transform:scaleX(0.9);transform-origin:0 50%;">00</div>
<div style="left:1232px;top:365px;width:33px;height:1px;background:#a0a0a0;"></div>
<div style="left:1253px;top:387px;width:12px;height:1px;background:#a0a0a0;"></div>
<div style="left:1233.5px;top:370px;width:21.8px;height:18px;line-height:18px;font-size:16px;color:#000;white-space:nowrap;">09</div>
<div style="left:1254.6px;top:371.9px;width:13.34px;height:10px;line-height:10px;font-size:8.4px;color:#000;white-space:nowrap;transform:scaleX(0.9);transform-origin:0 50%;">00</div>
<div style="left:1232px;top:409px;width:33px;height:1px;background:#a0a0a0;"></div>
<div style="left:1253px;top:431px;width:12px;height:1px;background:#a0a0a0;"></div>
<div style="left:1233.5px;top:414px;width:21.8px;height:18px;line-height:18px;font-size:16px;color:#000;white-space:nowrap;">10</div>
<div style="left:1254.6px;top:415.9px;width:13.34px;height:10px;line-height:10px;font-size:8.4px;color:#000;white-space:nowrap;transform:scaleX(0.9);transform-origin:0 50%;">00</div>
<div style="left:1232px;top:453px;width:33px;height:1px;background:#a0a0a0;"></div>
<div style="left:1253px;top:475px;width:12px;height:1px;background:#a0a0a0;"></div>
<div style="left:1233.5px;top:458px;width:20.61px;height:18px;line-height:18px;font-size:16px;color:#000;white-space:nowrap;">11</div>
<div style="left:1254.6px;top:459.9px;width:13.34px;height:10px;line-height:10px;font-size:8.4px;color:#000;white-space:nowrap;transform:scaleX(0.9);transform-origin:0 50%;">00</div>
<div style="left:1232px;top:497px;width:33px;height:1px;background:#a0a0a0;"></div>
<div style="left:1253px;top:519px;width:12px;height:1px;background:#a0a0a0;"></div>
<div style="left:1233.5px;top:502px;width:21.8px;height:18px;line-height:18px;font-size:16px;color:#000;white-space:nowrap;">12</div>
<div style="left:1254.6px;top:503.9px;width:13.34px;height:10px;line-height:10px;font-size:8.4px;color:#000;white-space:nowrap;transform:scaleX(0.9);transform-origin:0 50%;">00</div>
<div style="left:1232px;top:541px;width:33px;height:1px;background:#a0a0a0;"></div>
<div style="left:1253px;top:563px;width:12px;height:1px;background:#a0a0a0;"></div>
<div style="left:1233.5px;top:546px;width:21.8px;height:18px;line-height:18px;font-size:16px;color:#000;white-space:nowrap;">13</div>
<div style="left:1254.6px;top:547.9px;width:13.34px;height:10px;line-height:10px;font-size:8.4px;color:#000;white-space:nowrap;transform:scaleX(0.9);transform-origin:0 50%;">00</div>
<div style="left:1232px;top:585px;width:33px;height:1px;background:#a0a0a0;"></div>
<div style="left:1253px;top:607px;width:12px;height:1px;background:#a0a0a0;"></div>
<div style="left:1233.5px;top:590px;width:21.8px;height:18px;line-height:18px;font-size:16px;color:#000;white-space:nowrap;">14</div>
<div style="left:1254.6px;top:591.9px;width:13.34px;height:10px;line-height:10px;font-size:8.4px;color:#000;white-space:nowrap;transform:scaleX(0.9);transform-origin:0 50%;">00</div>
<div style="left:1232px;top:629px;width:33px;height:1px;background:#a0a0a0;"></div>
<div style="left:1253px;top:651px;width:12px;height:1px;background:#a0a0a0;"></div>
<div style="left:1233.5px;top:634px;width:21.8px;height:18px;line-height:18px;font-size:16px;color:#000;white-space:nowrap;">15</div>
<div style="left:1254.6px;top:635.9px;width:13.34px;height:10px;line-height:10px;font-size:8.4px;color:#000;white-space:nowrap;transform:scaleX(0.9);transform-origin:0 50%;">00</div>
<div style="left:1232px;top:673px;width:33px;height:1px;background:#a0a0a0;"></div>
<div style="left:1253px;top:695px;width:12px;height:1px;background:#a0a0a0;"></div>
<div style="left:1233.5px;top:678px;width:21.8px;height:18px;line-height:18px;font-size:16px;color:#000;white-space:nowrap;">16</div>
<div style="left:1254.6px;top:679.9px;width:13.34px;height:10px;line-height:10px;font-size:8.4px;color:#000;white-space:nowrap;transform:scaleX(0.9);transform-origin:0 50%;">00</div>
<div style="left:1232px;top:717px;width:33px;height:1px;background:#a0a0a0;"></div>
<div style="left:1253px;top:739px;width:12px;height:1px;background:#a0a0a0;"></div>
<div style="left:1233.5px;top:722px;width:21.8px;height:18px;line-height:18px;font-size:16px;color:#000;white-space:nowrap;">17</div>
<div style="left:1254.6px;top:723.9px;width:13.34px;height:10px;line-height:10px;font-size:8.4px;color:#000;white-space:nowrap;transform:scaleX(0.9);transform-origin:0 50%;">00</div>
<div style="left:1232px;top:761px;width:33px;height:1px;background:#a0a0a0;"></div>
<div style="left:1253px;top:783px;width:12px;height:1px;background:#a0a0a0;"></div>
<div style="left:1233.5px;top:766px;width:21.8px;height:18px;line-height:18px;font-size:16px;color:#000;white-space:nowrap;">18</div>
<div style="left:1254.6px;top:767.9px;width:13.34px;height:10px;line-height:10px;font-size:8.4px;color:#000;white-space:nowrap;transform:scaleX(0.9);transform-origin:0 50%;">00</div>
<div style="left:1226px;top:355px;width:44px;height:5px;background:linear-gradient(#e8e8e8,#c4c4c4);"></div>
<div style="left:1226px;top:784px;width:209px;height:25px;background:#f0f0f0;"></div>
<div style="left:1232px;top:791px;width:11px;height:11px;border:1px solid #333;background:#fff;"></div>
<div style="left:1249.2px;top:788.2px;width:81.92px;height:17px;line-height:17px;font-size:12.98px;color:#000;white-space:nowrap;">Za operatera:</div>
<div style="left:1332px;top:786px;width:96px;height:22px;background:#fff;border:1px solid #c8c8c8;"></div>
<div style="left:1411px;top:788px;width:15px;height:18px;background:#d6d6d6;"></div>
<svg style="position:absolute;left:1414px;top:795px;" width="9" height="5" viewBox="0 0 9 5"><path d="M0 0 H9 L4.5 5Z" fill="#000"/></svg>
<div style="left:1334px;top:788.3px;width:40.84px;height:17px;line-height:17px;font-size:13px;color:#000;white-space:nowrap;transform:scaleX(0.84);transform-origin:0 50%;">OPER</div>
<svg style="position:absolute;left:0px;top:0px;pointer-events:none;" width="1435" height="811" viewBox="0 0 1435 811"><rect x="297.2" y="86.7" width="178.4" height="35.9" rx="17" ry="7.5" fill="none" stroke="#ec1c24" stroke-width="4.8"/><rect x="1128.7" y="124.5" width="107.7" height="291.8" rx="12.5" ry="13" fill="none" stroke="#ec1c24" stroke-width="4.9"/></svg>
<div style="left:0px;top:809px;width:1435px;height:2px;background:#2b579a;"></div></body></html>
